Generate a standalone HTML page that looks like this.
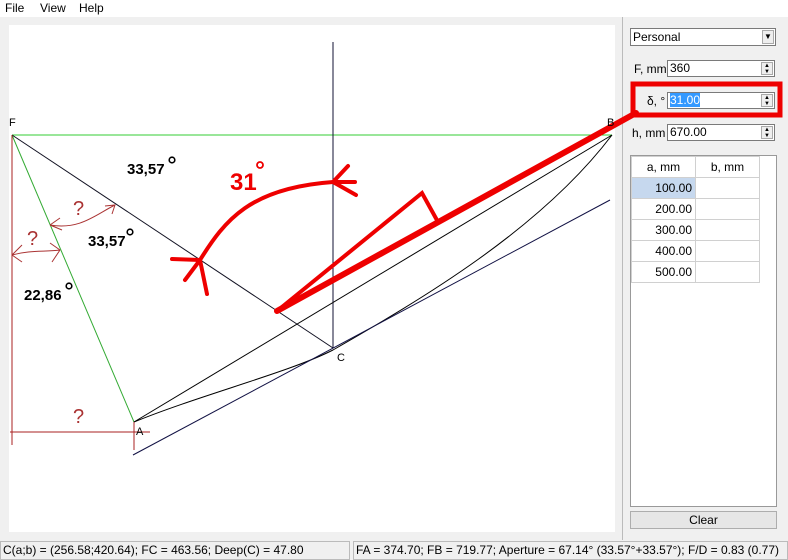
<!DOCTYPE html>
<html><head><style>
body{margin:0;width:788px;height:560px;background:#f0f0f0;font-family:"Liberation Sans",sans-serif;font-size:12px;position:relative;overflow:hidden}
.abs{position:absolute}
.menu{left:0;top:0;width:788px;height:17px;background:#fff}
.menu span{position:absolute;top:1px}
.inp{position:absolute;background:#fff;border:1px solid #7a7a7a;height:17px;box-sizing:border-box;font-size:12px;line-height:15px;padding-left:2px;white-space:nowrap}
.spin{position:absolute;right:1px;top:1px;width:12px;height:13px;border:1px solid #aaa;background:#eee;font-size:6px;line-height:6px;text-align:center;box-sizing:border-box}
.lbl{position:absolute;font-size:12px;white-space:nowrap}
table{border-collapse:collapse;font-size:12px}
td{border:1px solid #d0d0d0;height:21px;padding:0 3px;box-sizing:border-box}
</style></head><body>
<div class="abs menu"><span style="left:5px">File</span><span style="left:40px">View</span><span style="left:79px">Help</span></div>
<div class="abs" style="left:9px;top:25px;width:606px;height:507px;background:#fff"></div>
<div class="abs" style="left:622px;top:17px;width:1px;height:523px;background:#bbb"></div>
<svg class="abs" style="left:0;top:0" width="788" height="560">
<g fill="none" stroke-width="1">
<line x1="12" y1="135" x2="612" y2="135" stroke="#3c3"/>
<line x1="12" y1="135" x2="134" y2="422" stroke="#3a3"/>
<line x1="12" y1="135" x2="333" y2="348" stroke="#112"/>
<line x1="333" y1="42" x2="333" y2="348" stroke="#113"/>
<line x1="134" y1="422" x2="612" y2="135" stroke="#000"/>
<path d="M134,422 C200,395 290,372 333,350 C420,300 540,230 612,135" stroke="#000"/>
<line x1="133" y1="455" x2="610" y2="200" stroke="#114"/>
<line x1="12" y1="135" x2="12" y2="445" stroke="#a22"/>
<line x1="10" y1="432" x2="150" y2="432" stroke="#a22"/>
<line x1="134" y1="422" x2="134" y2="450" stroke="#a22"/>
<path d="M50,225 C80,230 95,215 115,205 M105,206 L115,205 L112,214 M50,225 L60,218 M50,225 L62,230" stroke="#a33"/>
<path d="M12,255 C30,250 45,252 60,250 M12,255 L22,245 M12,255 L22,262 M60,250 L50,243 M60,250 L52,262" stroke="#a33"/>
</g>
<g fill="none" stroke="#e00" stroke-linecap="round">
<path d="M200,260 C225,220 250,188 333,182" stroke-width="4"/>
<path d="M333,182 L348,166 M333,182 L355,182 M333,182 L356,195 M200,260 L172,259 M200,260 L185,280 M200,260 L207,294" stroke-width="4"/>
<path d="M277,311 L422,193 L438,222" stroke-width="4"/>
<path d="M277,311 L636,113" stroke-width="6"/>
<rect x="633" y="84" width="147" height="31" stroke-width="5"/>
</g>
<g font-weight="bold" font-size="15" fill="#000">
<text x="127" y="174">33,57</text><text x="88" y="246">33,57</text><text x="24" y="300">22,86</text>
</g>
<g fill="none" stroke="#000" stroke-width="1.6"><circle cx="172" cy="160" r="2.8"/><circle cx="130" cy="232" r="2.8"/><circle cx="69" cy="286" r="2.8"/></g>
<text x="230" y="190" font-weight="bold" font-size="24" fill="#e00">31</text>
<circle cx="260" cy="165" r="3" fill="none" stroke="#e00" stroke-width="1.8"/>
<g font-size="20" fill="#a33"><text x="73" y="215">?</text><text x="27" y="245">?</text><text x="73" y="423">?</text></g>
<g font-size="11" fill="#000"><text x="9" y="126">F</text><text x="607" y="126">B</text><text x="337" y="361">C</text><text x="136" y="435">A</text></g>
</svg>
<div class="inp" style="left:630px;top:28px;width:146px;height:18px;line-height:16px">Personal<div class="spin" style="height:14px;font-size:8px;line-height:12px">▼</div></div>
<div class="lbl" style="left:634px;top:62px">F, mm</div>
<div class="inp" style="left:667px;top:60px;width:108px">360<div class="spin">▲<br>▼</div></div>
<div class="lbl" style="left:647px;top:94px">δ, °</div>
<div class="inp" style="left:667px;top:92px;width:108px"><span style="background:#39f;color:#fff">31.00</span><div class="spin">▲<br>▼</div></div>
<div class="lbl" style="left:632px;top:126px">h, mm</div>
<div class="inp" style="left:667px;top:124px;width:108px">670.00<div class="spin">▲<br>▼</div></div>
<div class="abs" style="left:630px;top:155px;width:147px;height:352px;background:#fff;border:1px solid #999;box-sizing:border-box">
<table><tr><td style="width:64px;text-align:center">a, mm</td><td style="width:64px;text-align:center">b, mm</td></tr>
<tr><td style="text-align:right;background:#c6d8ee">100.00</td><td></td></tr>
<tr><td style="text-align:right">200.00</td><td></td></tr>
<tr><td style="text-align:right">300.00</td><td></td></tr>
<tr><td style="text-align:right">400.00</td><td></td></tr>
<tr><td style="text-align:right">500.00</td><td></td></tr></table></div>
<div class="abs" style="left:630px;top:511px;width:147px;height:18px;border:1px solid #adadad;background:#e6e6e6;box-sizing:border-box;text-align:center;line-height:16px">Clear</div>
<div class="abs" style="left:0;top:541px;width:350px;height:19px;border:1px solid #bbb;box-sizing:border-box;line-height:17px;padding-left:2px">C(a;b) = (256.58;420.64); FC = 463.56; Deep(C) = 47.80</div>
<div class="abs" style="left:353px;top:541px;width:435px;height:19px;border:1px solid #bbb;box-sizing:border-box;line-height:17px;padding-left:2px">FA = 374.70; FB = 719.77; Aperture = 67.14° (33.57°+33.57°); F/D = 0.83 (0.77)</div>
</body></html>
